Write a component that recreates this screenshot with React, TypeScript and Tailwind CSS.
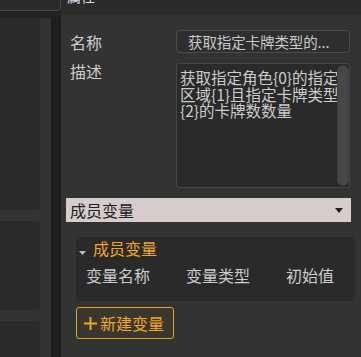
export default function App() {
  const font = { fontFamily: '"Noto Sans CJK SC", "Noto Sans", sans-serif' };
  return (
    <div className="w-[361px] h-[357px] flex overflow-hidden bg-[#1f1f1f]" style={font}>
      {/* Left dock */}
      <div className="w-[61px] shrink-0 flex flex-col">
        <div className="h-[11px] bg-[#2a2a2a] border-b border-r border-[#474747] rounded-br-[4px]" />
        <div className="h-[7px] bg-[#222222]" />
        <div className="flex-1 flex">
          <div className="w-[51px] bg-[#333333] rounded-tl-[3px] flex flex-col gap-[11px] pr-[11px]">
            <div className="h-[192px] bg-[#2a2a2a] rounded-r-[4px]" />
            <div className="h-[89px] bg-[#2a2a2a] rounded-r-[4px]" />
            <div className="flex-1 bg-[#2a2a2a] rounded-tr-[4px]" />
          </div>
          <div className="w-[10px] bg-[#1e1e1e]" />
        </div>
      </div>

      {/* Properties panel */}
      <div className="flex-1 flex flex-col bg-[#333333]">
        <div className="h-[15px] bg-[#2b2b2b] overflow-hidden pl-[6px]">
          <div className="text-[14px] leading-[16px] -mt-[12px] text-[#d4dbe8]">属性</div>
        </div>

        <div className="flex flex-col pt-[15px]">
          {/* Name */}
          <div className="flex items-center pl-[9px]">
            <div className="w-[106px] text-[16px] leading-[20px] text-[#cfcfcf]">名称</div>
            <div className="w-[174px] h-[23px] flex items-center bg-[#2e2e2e] border border-[#4b4b4b] rounded-[4px] pl-[11px] text-[14.5px] tracking-[-0.1px] text-[#c9c9c9] whitespace-nowrap">
              获取指定卡牌类型的...
            </div>
          </div>

          {/* Description */}
          <div className="flex items-start pl-[9px] mt-[10px]">
            <div className="w-[106px] text-[16px] leading-[18px] text-[#cfcfcf] -mt-[1px]">描述</div>
            <div className="w-[174px] h-[125px] flex bg-[#2a2a2a] border border-[#464646] rounded-[3px]">
              <div className="flex-1 overflow-hidden pl-[3px] pt-[5px] text-[15.5px] leading-[16.5px] text-[#cccccc] whitespace-nowrap">
                <div>获取指定角色{"{0}"}的指定</div>
                <div>区域{"{1}"}且指定卡牌类型</div>
                <div>{"{2}"}的卡牌数数量</div>
              </div>
              <div className="w-[12px] my-[1px] bg-[#474747] border border-[#3e3e3e] rounded-[6px]" />
            </div>
          </div>

          {/* Dropdown */}
          <div className="ml-[5px] mr-[10px] mt-[10px] h-[24px] flex items-center justify-between bg-[#d6cccc] pl-[4px] pr-[8px]">
            <span className="text-[16px] leading-[20px] text-[#222222]">成员变量</span>
            <svg width="8" height="5" viewBox="0 0 8 5">
              <path d="M0 0H8L4 5Z" fill="#1f1f1f" />
            </svg>
          </div>

          {/* Member variables */}
          <div className="ml-[15px] mr-[6px] mt-[15px] h-[64px] bg-[#2a2a2a] rounded-[4px] flex flex-col">
            <div className="flex items-center h-[20px] pt-[1px]">
              <svg width="7" height="4" viewBox="0 0 7 4" className="ml-[3px] mt-[10px]">
                <path d="M0 0H7L3.5 4Z" fill="#bdbdbd" />
              </svg>
              <span className="ml-[7px] text-[16px] leading-[18px] text-[#f2a81d]">成员变量</span>
            </div>
            <div className="flex pl-[10px] mt-[9px] text-[16px] leading-[18px] text-[#cccccc]">
              <span className="w-[100px]">变量名称</span>
              <span className="w-[100px]">变量类型</span>
              <span>初始值</span>
            </div>
          </div>

          {/* New variable button */}
          <div className="ml-[15px] mt-[6px] w-[98px] h-[32px] flex items-center bg-[#3a3730] border border-[#e6a21c] rounded-[3px] pl-[7px]">
            <svg width="13" height="13" viewBox="0 0 13 13">
              <path d="M6.5 0V13M0 6.5H13" stroke="#f2a81d" strokeWidth="2" />
            </svg>
            <span className="ml-[3px] text-[16px] leading-[18px] text-[#f2a81d]">新建变量</span>
          </div>
        </div>
      </div>
    </div>
  );
}
